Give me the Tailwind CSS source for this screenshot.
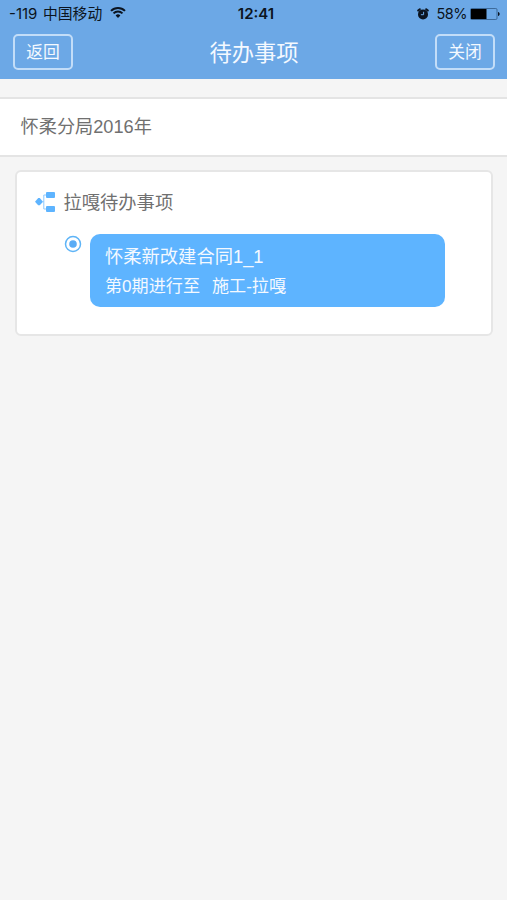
<!DOCTYPE html>
<html lang="zh-CN">
<head>
    <meta charset="UTF-8">
    <meta name="viewport" content="width=device-width, initial-scale=1.0">
    <title>待办事项</title>
    <script src="https://cdn.jsdelivr.net/npm/@tailwindcss/browser@4"></script>
</head>
<body class="min-h-screen bg-[#f5f5f5] font-['Liberation_Sans','Noto_Sans_CJK_SC',sans-serif] font-normal text-[#707070]">
    <header class="h-[79px] bg-[#6ca8e6]">
        <!-- Status bar -->
        <div class="grid h-7 grid-cols-3 items-center pl-[9px] pr-[7px] font-['Inter','Noto_Sans_CJK_SC',sans-serif] text-[14.5px] font-normal text-[#0b1420]">
            <div class="flex items-center whitespace-nowrap">
                <span class="w-[34px] text-[15px]">-119</span>
                <span class="text-[14.8px]">中国移动</span>
                <svg class="ml-2 mb-[3px] h-[11px] w-4" viewBox="0 0 16 11" fill="none" stroke="currentColor" stroke-width="2">
                    <path d="M1 3.9a10 10 0 0 1 14 0M3.5 6.4a6.4 6.4 0 0 1 9 0"/>
                    <path d="M5.6 8.4a3.4 3.4 0 0 1 4.8 0L8 11z" fill="currentColor" stroke="none"/>
                </svg>
            </div>
            <div class="pl-[3px] text-center text-[15px] font-semibold">12:41</div>
            <div class="flex items-center justify-end">
                <svg class="mr-[7px] mb-px h-3 w-3" viewBox="0 0 12 12">
                    <g fill="none" stroke="currentColor" stroke-width="2" stroke-linecap="round">
                        <path d="M1.2 2.6l1.6-1.4M10.8 2.6L9.2 1.2"/>
                    </g>
                    <circle cx="6" cy="6.4" r="5" fill="currentColor"/>
                    <path d="M6.6 3.8v2.9H3.9" fill="none" stroke="#6ca8e6" stroke-width="1"/>
                </svg>
                <span class="tracking-[-0.5px]">58%</span>
                <svg class="ml-[3px] h-3 w-[30px]" viewBox="0 0 30 12">
                    <rect x=".5" y=".5" width="26.5" height="11" rx="1.2" fill="none" stroke="#315b86" stroke-width=".8"/>
                    <path d="M1 1h15.5v10H1z" fill="#000"/>
                    <path d="M28 4c2.2.6 2.2 3.4 0 4z" fill="currentColor"/>
                </svg>
            </div>
        </div>
        <!-- Title bar -->
        <nav class="flex items-start justify-between pl-[13px] pr-3 pt-1.5 text-[#f4f9ff]">
            <button class="h-9 w-[60px] rounded-[5px] border-2 border-[#c3ddf8] pt-0.5 text-[16.8px] leading-none">返回</button>
            <h1 class="pt-0.5 text-[22.3px] leading-[36px]">待办事项</h1>
            <button class="h-9 w-[60px] rounded-[5px] border-2 border-[#c3ddf8] pt-0.5 text-[16.8px] leading-none">关闭</button>
        </nav>
    </header>

    <main>
        <h2 class="mt-[18px] flex h-[60px] items-center border-y-2 border-[#e4e4e4] bg-white pl-[20.5px] pt-0.5 text-[18.2px]">怀柔分局2016年</h2>

        <section class="ml-[15px] mr-3.5 mt-[13px] h-[166px] rounded-md border-2 border-[#e6e6e6] bg-white pl-[18px] pt-[18px]">
            <div class="flex h-6 items-center">
                <svg class="h-5 w-5" viewBox="0 0 20 20" fill="#5eb4ff">
                    <path d="M0 9.7l3.2-3.6h1.6L8 9.7l-3.2 3.6H3.2z"/>
                    <path d="M7 9.7h1.8M12 3H8.8v14H12" fill="none" stroke="#8dc9ff" stroke-width="1"/>
                    <rect x="11" y="0" width="9" height="6" rx="1"/>
                    <rect x="11" y="14" width="9" height="6" rx="1"/>
                </svg>
                <h3 class="ml-[8.5px] pt-0.5 text-[18.3px]">拉嘎待办事项</h3>
            </div>
            <div class="mt-5 flex items-start pl-[29px]">
                <svg class="mt-px h-[18px] w-[18px]" viewBox="0 0 18 18">
                    <circle cx="9" cy="9" r="7.5" fill="none" stroke="#5eb4f7" stroke-width="1.5"/>
                    <circle cx="9" cy="9" r="3.8" fill="#5aacf5"/>
                </svg>
                <div class="ml-2 h-[73px] w-[355px] rounded-[10px] bg-[#5eb4ff] pl-[15px] pt-2 text-[#f4f9ff]">
                    <p class="text-[18.3px] leading-[30px]">怀柔新改建合同1_1</p>
                    <p class="flex gap-3 text-[17.1px] leading-[29px]"><span>第0期进行至</span><span>施工-拉嘎</span></p>
                </div>
            </div>
        </section>
    </main>
</body>
</html>
